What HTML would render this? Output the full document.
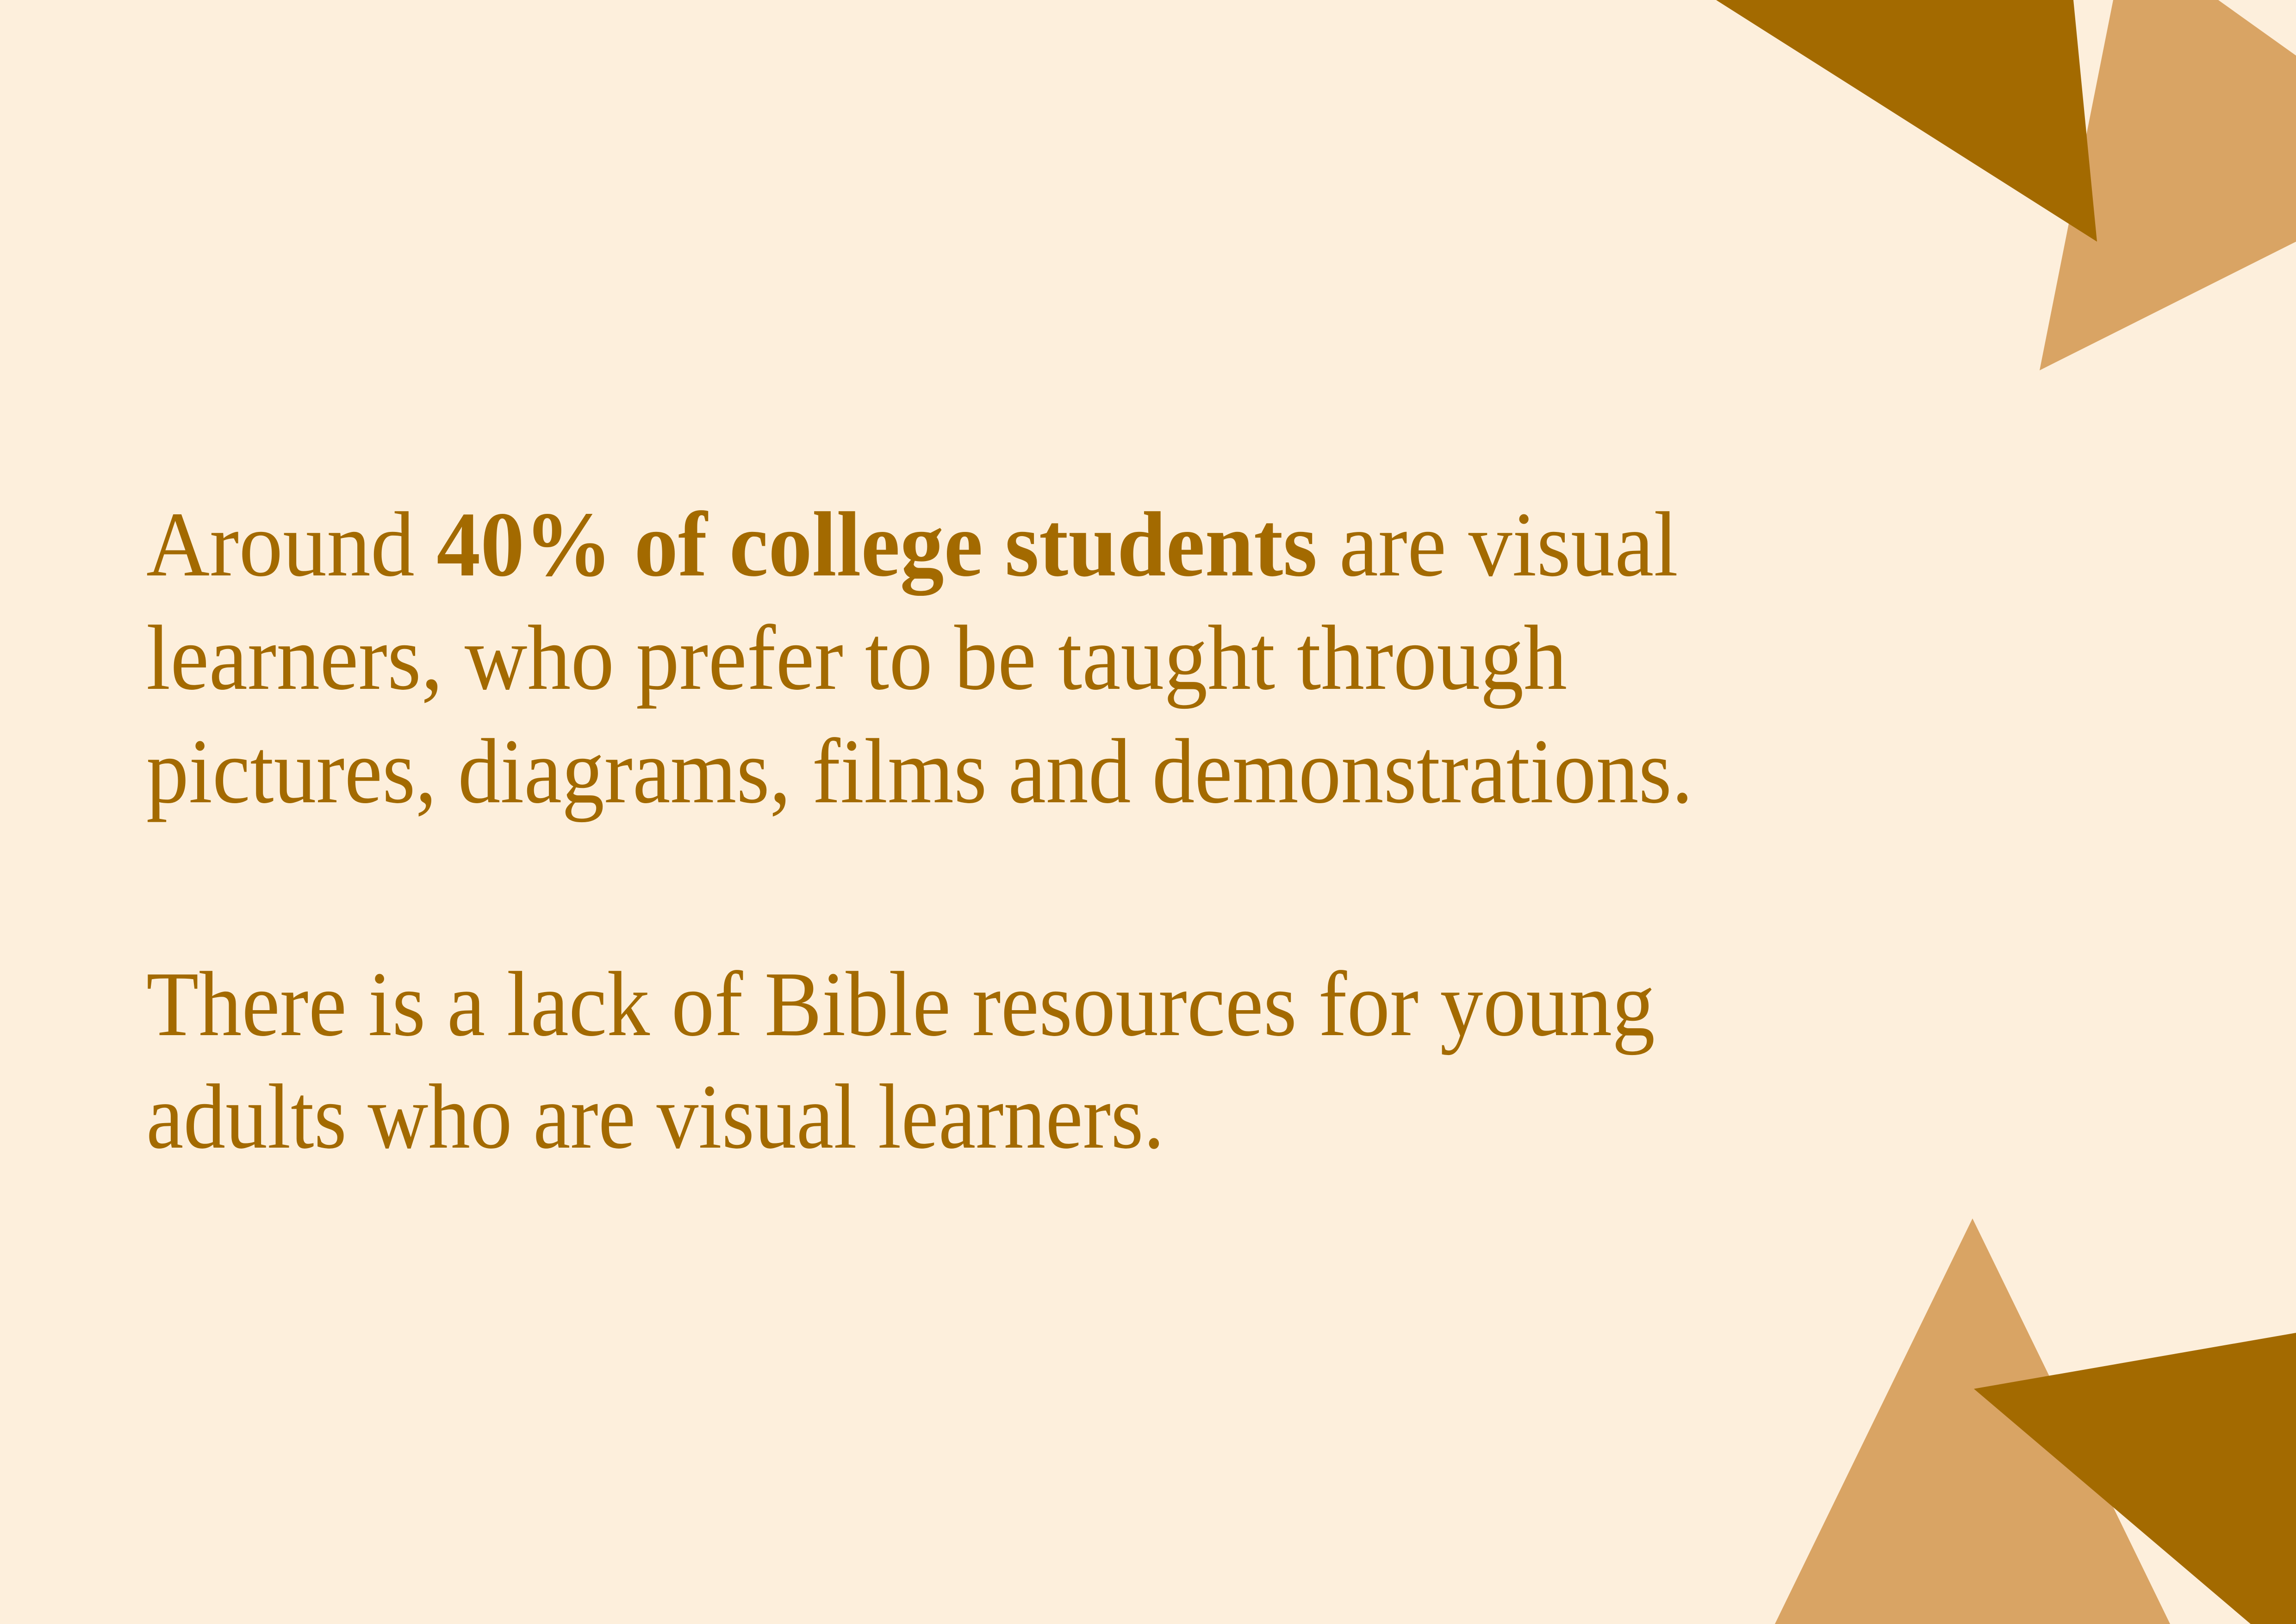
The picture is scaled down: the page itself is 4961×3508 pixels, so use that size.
<!DOCTYPE html>
<html><head><meta charset="utf-8"><style>
html,body{margin:0;padding:0}
body{width:4961px;height:3508px;background:#fdefdc;position:relative;overflow:hidden;font-family:"Liberation Serif",serif;color:#a36a00}
.l{position:absolute;left:316px;font-size:200px;line-height:200px;white-space:nowrap;transform-origin:0 0}
b{font-weight:bold}
svg{position:absolute;left:0;top:0}
</style></head><body>
<svg width="4961" height="3508">
<polygon points="4566,0 4793,0 4961,120 4961,522 4407,800" fill="#d9a464"/>
<polygon points="3708,0 4480,0 4531,522" fill="#a36a00"/>
<polygon points="4262,2632 3835,3508 4689,3508" fill="#d9a464"/>
<polygon points="4265,3000 4961,2879 4961,3508 4863,3508" fill="#a36a00"/>
</svg>
<div class="l" data-w="3310" style="top:1077px">Around <b>40% of college students</b> are visual</div>
<div class="l" data-w="3070" style="top:1322px">learners, who prefer to be taught through</div>
<div class="l" data-w="3342" style="top:1567px">pictures, diagrams, films and demonstrations.</div>
<div class="l" data-w="3260" style="top:2070px">There is a lack of Bible resources for young</div>
<div class="l" data-w="2200" style="top:2313px">adults who are visual learners.</div>
<script>
document.querySelectorAll('.l').forEach(function(e){
  var w=e.getBoundingClientRect().width;
  var t=+e.getAttribute('data-w');
  if(w>0)e.style.transform='scaleX('+(t/w)+')';
});
</script>
</body></html>
